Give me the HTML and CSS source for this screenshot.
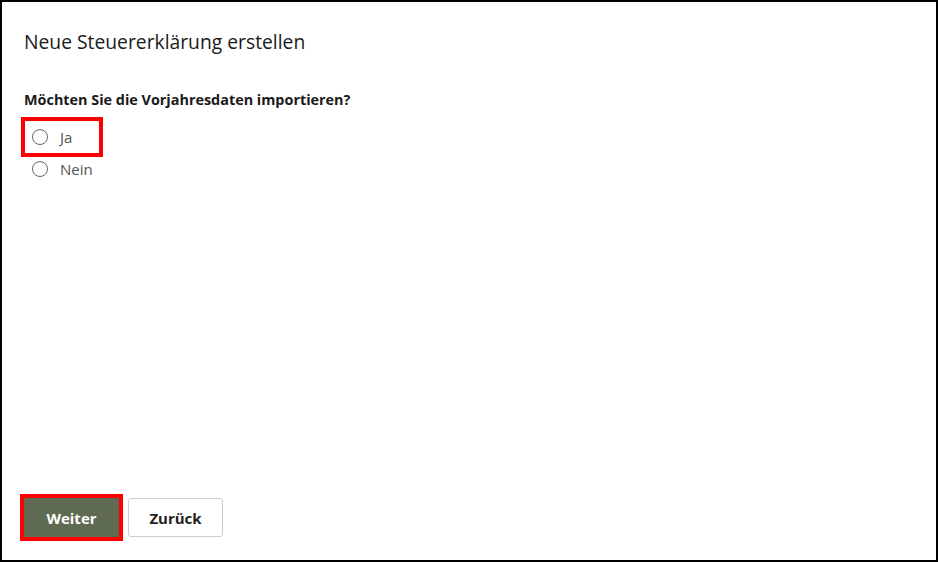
FILE: index.html
```html
<!DOCTYPE html>
<html lang="de">
<head>
  <meta charset="UTF-8">
  <meta name="viewport" content="width=device-width, initial-scale=1">
  <title>Neue Steuererklärung erstellen</title>
  <link rel="stylesheet" href="styles.css">
</head>
<body>

  <div class="dialog">
    <h1>Neue Steuererklärung erstellen</h1>

    <div class="question">
      <p class="label">Möchten Sie die Vorjahresdaten importieren?</p>
      <div class="options">
        <label class="option marked"><input type="radio" name="import" value="ja"> Ja</label>
        <label class="option"><input type="radio" name="import" value="nein"> Nein</label>
      </div>
    </div>

    <div class="actions">
      <button class="btn primary marked">Weiter</button>
      <button class="btn">Zurück</button>
    </div>
  </div>

</body>
</html>
```

FILE: styles.css
```css
html, body {
  margin: 0;
  height: 100%;
}
body {
  font-family: "Open Sans", "Noto Sans", Arial, sans-serif;
  color: #1a1a1a;
  background: #fff;
}
.dialog {
  box-sizing: border-box;
  height: 100%;
  border: 2px solid #000;
  padding: 26px 22px 23px;
  display: flex;
  flex-direction: column;
}
h1 {
  margin: 0;
  font-size: 19.3px;
  font-weight: 400;
  line-height: 28px;
}
.question {
  margin-top: 34px;
  flex: 1;
}
.label {
  margin: 0;
  font-size: 14.4px;
  font-weight: 700;
  line-height: 20px;
}
.options {
  display: flex;
  flex-direction: column;
  align-items: flex-start;
  margin-top: 11px;
}
.option {
  display: flex;
  align-items: center;
  gap: 12px;
  height: 32px;
  padding: 0 8px;
  font-size: 15px;
  color: #555;
}
.option input {
  appearance: none;
  margin: 0;
  width: 16px;
  height: 16px;
  border: 1px solid #666;
  border-radius: 50%;
  background: #fff;
}
.marked {
  outline: 4px solid #f00;
  outline-offset: 0;
}
.option.marked {
  box-sizing: border-box;
  width: 82px;
  height: 40px;
  margin: -4px 0 -4px -3px;
  padding-left: 11px;
  outline-offset: -4px;
}
.actions {
  display: flex;
  gap: 9px;
}
.btn {
  height: 39px;
  min-width: 95px;
  padding: 0 20px;
  font-family: inherit;
  font-size: 15px;
  font-weight: 700;
  color: #222;
  background: #fff;
  border: 1px solid #ccc;
  border-radius: 3px;
  cursor: pointer;
}
.btn.primary {
  color: #fff;
  background: #5e6a51;
  border-color: #5e6a51;
  border-radius: 0;
}
```
